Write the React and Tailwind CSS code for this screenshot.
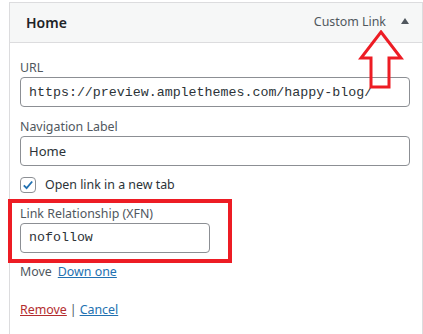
import React from "react";

const sans = { fontFamily: '"Noto Sans", "Open Sans", sans-serif' };

function UpArrow() {
  return (
    <svg
      className="absolute left-[358px] top-[30px]"
      width="46"
      height="60"
      viewBox="0 0 46 60"
      fill="none"
    >
      <path
        d="M23 2 L43 28 L31 28 L31 57 L13 57 L13 28 L3 28 Z"
        stroke="#ed1c24"
        strokeWidth="3"
        strokeLinejoin="miter"
      />
    </svg>
  );
}

function Field({ label, value, width, className = "" }) {
  return (
    <div className={className}>
      <label className="block text-[12.4px] leading-[18px] text-[#50575e]">{label}</label>
      <input
        readOnly
        value={value}
        className="block h-[30px] rounded-[4px] border border-[#8c8f94] bg-white px-[8px] font-['Liberation_Mono',monospace] text-[13.3px] text-[#2c3338] outline-none"
        style={{ width }}
      />
    </div>
  );
}

export default function App() {
  return (
    <div className="relative h-[334px] w-[423px] overflow-hidden bg-white" style={sans}>
      <div className="ml-[9px] mt-[2px] h-[340px] w-[414px] border border-[#dcdcde]">
        <div className="flex h-[40px] items-center justify-between border-b border-[#dcdcde] bg-[#f6f7f7] pl-[16px] pr-[13px]">
          <span className="text-[14px] font-semibold text-[#1d2327]">Home</span>
          <div className="flex items-center gap-[15px]">
            <span className="text-[12.4px] text-[#50575e]">Custom Link</span>
            <svg width="8" height="6" viewBox="0 0 8 6" className="mb-[2px]">
              <path d="M4 0 L8 6 L0 6 Z" fill="#50575e" />
            </svg>
          </div>
        </div>

        <div className="px-[10px] pt-[16px]">
          <Field label="URL" value="https://preview.amplethemes.com/happy-blog/" width={390} />
          <Field
            label="Navigation Label"
            value="Home"
            width={390}
            className="mt-[11px] [&_input]:font-['Noto_Sans',sans-serif] [&_input]:text-[13px]"
          />

          <label className="mt-[10px] flex items-center gap-[9px] text-[12.4px] text-[#2c3338]">
            <span className="flex h-[16px] w-[16px] items-center justify-center rounded-[4px] border border-[#8c8f94] bg-white">
              <svg width="14" height="14" viewBox="0 0 20 20">
                <path d="M4 10.5 L8 14.5 L16 5" stroke="#2271b1" strokeWidth="2.6" fill="none" />
              </svg>
            </span>
            Open link in a new tab
          </label>

          <div className="-ml-[12px] mt-[4px] w-[224px] border-4 border-[#ed1c24] pb-[6px] pl-[8px] pt-[2px]">
            <Field label="Link Relationship (XFN)" value="nofollow" width={190} />
          </div>

          <div className="flex gap-[6px] text-[12.4px] leading-[18px] text-[#50575e]">
            <span>Move</span>
            <a className="text-[#2271b1] underline">Down one</a>
          </div>

          <div className="mt-[20px] flex items-center gap-[3px] text-[12.4px] leading-[18px]">
            <a className="text-[#b32d2e] underline">Remove</a>
            <span className="text-[#50575e]">|</span>
            <a className="text-[#2271b1] underline">Cancel</a>
          </div>
        </div>
      </div>
      <UpArrow />
    </div>
  );
}
